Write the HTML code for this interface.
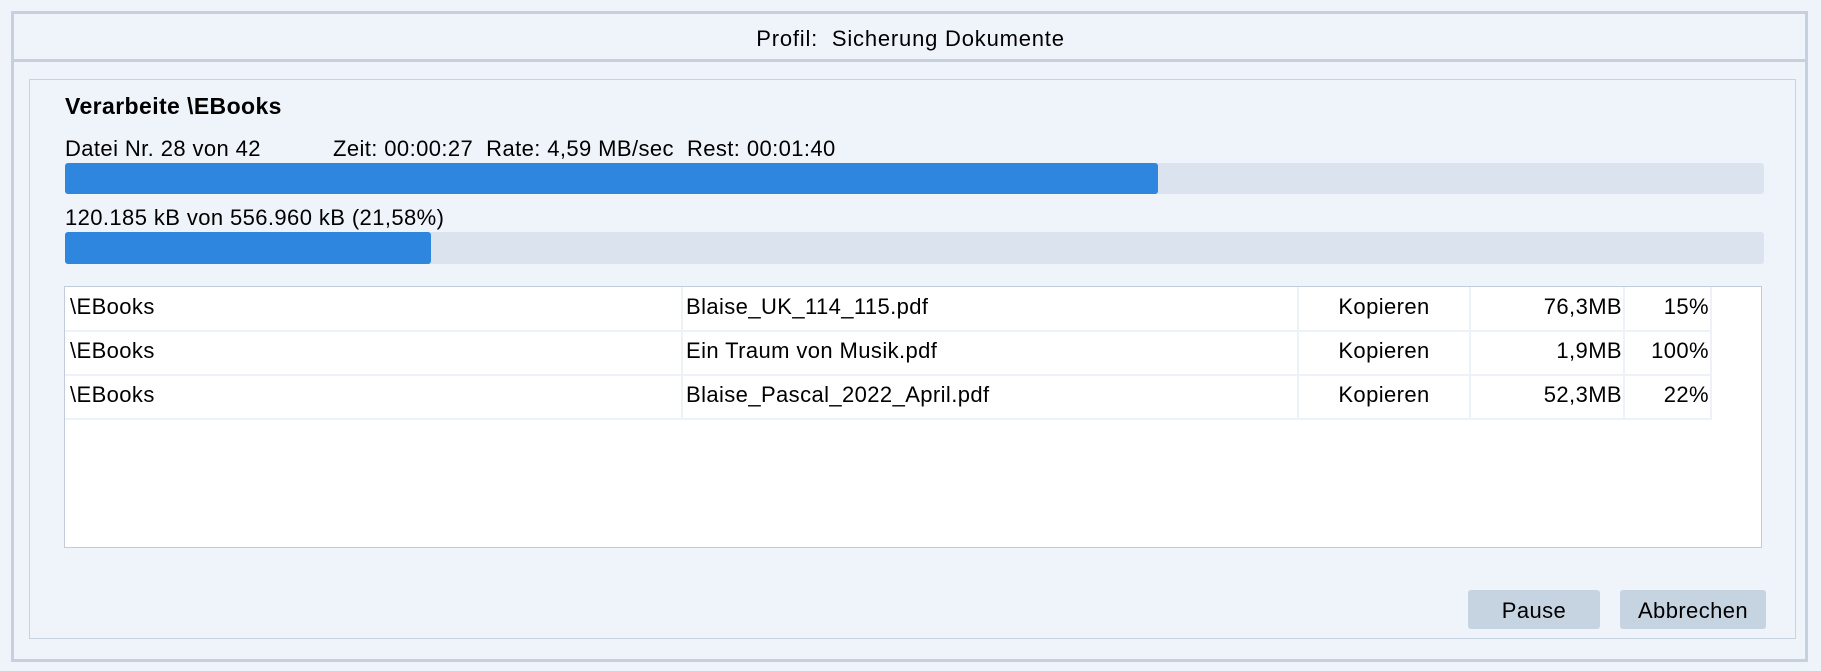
<!DOCTYPE html>
<html><head><meta charset="utf-8"><style>
*{box-sizing:border-box;margin:0;padding:0}
body{width:1821px;height:671px;background:#eff4fb;font-family:"Liberation Sans",sans-serif;color:#000;position:relative;overflow:hidden}
.a{position:absolute}
.t{font-size:22px;letter-spacing:0.4px;white-space:nowrap;line-height:24px}
</style></head><body>
<div class="a" style="left:11px;top:11px;width:1797px;height:651px;border:3px solid #c6d1dd"></div>
<div class="a" style="left:11px;top:59px;width:1797px;height:3px;background:#c6d1dd"></div>
<div class="a t" style="left:0;width:1821px;text-align:center;top:27px;letter-spacing:0.8px">Profil:&nbsp; Sicherung Dokumente</div>
<div class="a" style="left:29px;top:79px;width:1767px;height:560px;border:1px solid #c9d3df"></div>
<div class="a t" style="left:65px;top:94px;font-weight:bold;font-size:23px;letter-spacing:0.4px">Verarbeite \EBooks</div>
<div class="a t" style="left:65px;top:137px">Datei Nr. 28 von 42</div>
<div class="a t" style="left:333px;top:137px">Zeit: 00:00:27&nbsp; Rate: 4,59 MB/sec&nbsp; Rest: 00:01:40</div>
<div class="a" style="left:65px;top:163px;width:1699px;height:31px;background:#dbe3ee;border-radius:3px"></div>
<div class="a" style="left:65px;top:163px;width:1093px;height:31px;background:#2e86de;border-radius:3px"></div>
<div class="a t" style="left:65px;top:206px">120.185 kB von 556.960 kB (21,58%)</div>
<div class="a" style="left:65px;top:232px;width:1699px;height:32px;background:#dbe3ee;border-radius:3px"></div>
<div class="a" style="left:65px;top:232px;width:366px;height:32px;background:#2e86de;border-radius:3px"></div>
<div class="a" style="left:64px;top:286px;width:1698px;height:262px;background:#fff;border:1px solid #c2ccd8"></div>
<div class="a" style="left:65px;top:330px;width:1646px;height:2px;background:#edf2f9"></div>
<div class="a" style="left:65px;top:374px;width:1646px;height:2px;background:#edf2f9"></div>
<div class="a" style="left:65px;top:418px;width:1646px;height:2px;background:#edf2f9"></div>
<div class="a" style="left:681px;top:287px;width:2px;height:133px;background:#edf2f9"></div>
<div class="a" style="left:1297px;top:287px;width:2px;height:133px;background:#edf2f9"></div>
<div class="a" style="left:1469px;top:287px;width:2px;height:133px;background:#edf2f9"></div>
<div class="a" style="left:1623px;top:287px;width:2px;height:133px;background:#edf2f9"></div>
<div class="a" style="left:1710px;top:287px;width:2px;height:133px;background:#edf2f9"></div>
<div class="a t" style="left:70px;top:295px">\EBooks</div>
<div class="a t" style="left:686px;top:295px">Blaise_UK_114_115.pdf</div>
<div class="a t" style="left:1299px;width:170px;text-align:center;top:295px">Kopieren</div>
<div class="a t" style="left:1471px;width:151px;text-align:right;top:295px">76,3MB</div>
<div class="a t" style="left:1625px;width:84px;text-align:right;top:295px">15%</div>
<div class="a t" style="left:70px;top:339px">\EBooks</div>
<div class="a t" style="left:686px;top:339px">Ein Traum von Musik.pdf</div>
<div class="a t" style="left:1299px;width:170px;text-align:center;top:339px">Kopieren</div>
<div class="a t" style="left:1471px;width:151px;text-align:right;top:339px">1,9MB</div>
<div class="a t" style="left:1625px;width:84px;text-align:right;top:339px">100%</div>
<div class="a t" style="left:70px;top:383px">\EBooks</div>
<div class="a t" style="left:686px;top:383px">Blaise_Pascal_2022_April.pdf</div>
<div class="a t" style="left:1299px;width:170px;text-align:center;top:383px">Kopieren</div>
<div class="a t" style="left:1471px;width:151px;text-align:right;top:383px">52,3MB</div>
<div class="a t" style="left:1625px;width:84px;text-align:right;top:383px">22%</div>
<div class="a t" style="left:1468px;top:590px;width:132px;height:39px;background:#c6d3e0;border-radius:3px;text-align:center;line-height:41px">Pause</div>
<div class="a t" style="left:1620px;top:590px;width:146px;height:39px;background:#c6d3e0;border-radius:3px;text-align:center;line-height:41px">Abbrechen</div>
</body></html>
